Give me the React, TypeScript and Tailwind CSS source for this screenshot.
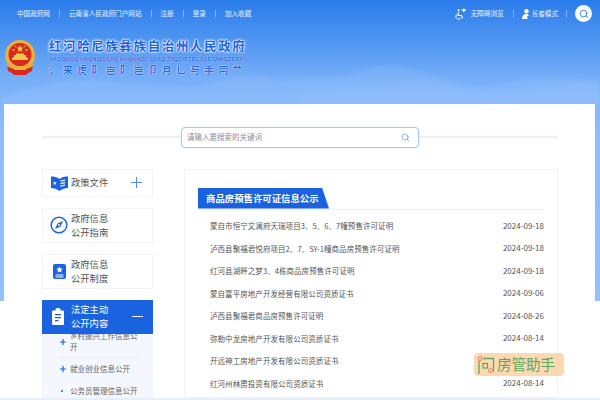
import { Search } from "lucide-react";

const rows = [
  ["蒙自市恒宁文澜府天瑞项目3、5、6、7幢预售许可证明", "2024-09-18"],
  ["泸西县聚福君悦府项目2、7、SY-1幢商品房预售许可证明", "2024-09-18"],
  ["红河县湖畔之梦3、4栋商品房预售许可证明", "2024-09-18"],
  ["蒙自富平房地产开发经营有限公司资质证书", "2024-09-06"],
  ["泸西县聚福君商品房预售许可证明", "2024-08-26"],
  ["弥勒中龙房地产开发有限公司资质证书", "2024-08-14"],
  ["开远神工房地产开发有限公司资质证书", "2024-08-14"],
  ["红河州林雳投资有限公司资质证书", "2024-08-14"],
];

function Sep() {
  return <span className="block h-[7px] w-px bg-white/40" />;
}

function Emblem() {
  return (
    <svg viewBox="0 0 34 36" className="h-[36px] w-[34px] shrink-0">
      <circle cx="16" cy="15" r="15" fill="#e9b23a" />
      <circle cx="16" cy="14.500" r="11.500" fill="#d8281f" />
      <path d="M16 5l1 2.600h2.700l-2.200 1.700.8 2.700-2.300-1.600-2.300 1.600.8-2.700-2.200-1.700H15z" fill="#f6d04d" />
      <circle cx="9.500" cy="10" r="1" fill="#f6d04d" />
      <circle cx="22.500" cy="10" r="1" fill="#f6d04d" />
      <circle cx="11.500" cy="6.500" r=".8" fill="#f6d04d" />
      <circle cx="20.500" cy="6.500" r=".8" fill="#f6d04d" />
      <path d="M8 20h16v-2l-2-1v-2h-2v-1.500h-8V15h-2v2l-2 1z" fill="#f3c648" />
      <path d="M3 24c4 3 7 2 9 4h8c2-2 5-1 9-4l-1 7c-3 1-5 3-6 4H10c-1-1-3-3-6-4z" fill="#d8281f" />
      <path d="M2 23c3 3 7 3 10 4h8c3-1 7-1 10-4l-1 3c-3 2-6 2-8 4H11c-2-2-5-2-8-4z" fill="#e9b23a" />
    </svg>
  );
}

function BookIcon() {
  return (
    <svg viewBox="0 0 17 16" className="h-[16px] w-[17px] shrink-0">
      <path d="M0 1.500c3 0 6 .5 8.500 2.500C11 2 14 1.500 17 1.500V13c-3 0-6 1-8.500 3C6 14 3 13 0 13z" fill="#1a62e0" />
      <path d="M3.800 6.200l.6 1.300 1.400.1-1.100.9.4 1.400-1.300-.8-1.200.8.300-1.400-1-.9 1.400-.1z" fill="#fff" />
      <path d="M9.500 5.500l4.500-1v1.200l-4.500 1zM9.500 8l4.500-1v1.200l-4.500 1zM9.500 10.500l4.500-1v1.200l-4.500 1z" fill="#fff" />
    </svg>
  );
}

function CompassIcon() {
  return (
    <svg viewBox="0 0 18 18" className="h-[18px] w-[18px] shrink-0">
      <circle cx="9" cy="9" r="7.800" fill="none" stroke="#1a62e0" strokeWidth="1.500" />
      <path d="M13 5l-2.500 5.500L5 13l2.500-5.500z" fill="#1a62e0" />
      <circle cx="9" cy="9" r="1" fill="#fff" />
    </svg>
  );
}

function RuleIcon() {
  return (
    <svg viewBox="0 0 13 15" className="h-[15px] w-[13px] shrink-0">
      <rect width="13" height="15" rx="2" fill="#1a62e0" />
      <path d="M6.500 2.500l1 2 2.200.3-1.600 1.500.4 2.200-2-1-2 1 .4-2.200-1.600-1.500 2.200-.3z" fill="#fff" />
      <path d="M2.500 10.500h8v1h-8zM2.500 12.500h8v1h-8z" fill="#fff" />
    </svg>
  );
}

function ClipboardIcon() {
  return (
    <svg viewBox="0 0 12 17" className="h-[17px] w-[12px] shrink-0">
      <path d="M1 2.500h2.500V1.500A1.500 1.500 0 0 1 5 0h2a1.500 1.500 0 0 1 1.500 1.500v1H11a1 1 0 0 1 1 1V16a1 1 0 0 1-1 1H1a1 1 0 0 1-1-1V3.500a1 1 0 0 1 1-1z" fill="#fff" />
      <path d="M3 6h6v1.300H3zM3 9h6v1.300H3zM3 12h3.500v1.300H3z" fill="#1a62e0" />
    </svg>
  );
}

function WheelchairIcon() {
  return (
    <svg viewBox="0 0 13 13" className="h-[12px] w-[12px]">
      <circle cx="4" cy="2.500" r="1.200" fill="#fff" />
      <path d="M3.500 4.500v3.700h3.500l1.500 3" fill="none" stroke="#fff" strokeWidth="1.200" />
      <path d="M2.600 6.500a3 3 0 1 0 4 4" fill="none" stroke="#fff" strokeWidth="1" />
      <path d="M7 2a3.500 3.500 0 0 1 5 0l-2.500 2.500z" fill="#fff" />
    </svg>
  );
}

function PersonIcon() {
  return (
    <svg viewBox="0 0 8 10" className="h-[10px] w-[8px]">
      <circle cx="4.500" cy="2.200" r="2.200" fill="#fff" />
      <path d="M0 10c0-3 1.500-5 4-5 1.500 0 2.500.7 3 1.500L4.500 8 6 10z" fill="#fff" />
    </svg>
  );
}

function SmallPlus() {
  return (
    <svg viewBox="0 0 6 6" className="h-[6px] w-[6px]">
      <path d="M0 3h6M3 0v6" stroke="#1a62e0" strokeWidth="1.200" />
    </svg>
  );
}

function Card({ icon, lines, right }: { icon: React.ReactNode; lines: string[]; right?: React.ReactNode }) {
  return (
    <div className={`flex items-center border border-[#f1f3f6] bg-white pl-[7px] pr-[10px] ${lines.length > 1 ? "h-[35px]" : "h-[28px]"}`}>
      <div className="flex w-[21px] shrink-0 justify-center pr-[3px]">{icon}</div>
      <div className="flex-1 pt-[1px] text-[9.300px] leading-[13.500px] text-[#555]">
        {lines.map((l) => (
          <div key={l}>{l}</div>
        ))}
      </div>
      {right}
    </div>
  );
}

export default function App() {
  return (
    <div
      className="relative flex h-[400px] w-[600px] flex-col overflow-hidden bg-white bg-[linear-gradient(180deg,#2a7ceb_0px,#4f95f1_40px,#78aff9_80px,#8dbdfd_130px,#93c1ff_301px)] bg-[length:100%_301px] bg-no-repeat font-['Noto_Sans_CJK_SC','Noto_Sans',sans-serif]"
    >
      <svg viewBox="0 0 600 50" className="absolute left-0 top-[55px] h-[50px] w-[600px] blur-[2px]">
        <path d="M0 42C40 30 70 20 110 26c30 5 50 2 80 6 40-8 60-20 90-6 30-8 50-2 70-6 20-8 40-14 60-6 30 6 50 20 80 16 40-6 70-14 110 0v20H0z" fill="#fff" opacity=".07" />
        <path d="M300 40c40-10 70-6 100-10 30-2 60 2 90 8 40-4 70-6 110-14v26H300z" fill="#fff" opacity=".05" />
      </svg>

      <div className="relative flex h-[27px] shrink-0 items-center pl-[17px] pr-[8px] text-[6.600px] text-white/90">
        <div className="flex items-center gap-[9px]">
          <span>中国政府网</span>
          <Sep />
          <span>云南省人民政府门户网站</span>
          <Sep />
          <span>注册</span>
          <Sep />
          <span>登录</span>
          <Sep />
          <span>加入收藏</span>
        </div>
        <div className="ml-auto flex items-center">
          <WheelchairIcon />
          <span className="ml-[4px]">无障碍浏览</span>
          <span className="ml-[9px] mr-[8px]"><Sep /></span>
          <PersonIcon />
          <span className="ml-[2px]">长者模式</span>
          <span className="ml-[8px] mr-[8px]"><Sep /></span>
          <div className="flex h-[17px] w-[17px] items-center justify-center rounded-full bg-white">
            <Search size={10} strokeWidth={2} className="text-[#2a6fc9]" />
          </div>
        </div>
      </div>

      <div className="relative flex h-[76.500px] shrink-0 items-start pl-[4px] pt-[12px]">
        <div className="pt-[1px]">
          <Emblem />
        </div>
        <div className="ml-[11px] w-[200px]">
          <div className="whitespace-nowrap text-[12.500px] font-bold leading-[14px] tracking-[1.600px] text-[#1a5fe0] [text-shadow:0_0_1px_#fff,0_0_1px_#fff,0_0_2px_#fff,0_0_3px_#fff]">
            红河哈尼族彝族自治州人民政府
          </div>
          <div className="mt-[3px] whitespace-nowrap font-['Liberation_Sans',sans-serif] text-[5.400px] font-bold leading-[7px] tracking-[.13px] text-[#1a5fe0] [text-shadow:0_0_1px_#fff]">
            HAOQHOQ HAQNIQSSAQ HAQHHOL SSAQ ZIIQZIIFZEL SSEIQMIQZEIFFU
          </div>
          <div className="mt-[1px] whitespace-nowrap text-[10px] font-bold leading-[11px] tracking-[4.100px] text-[#2a66e0] [text-shadow:0_0_1px_#fff,0_0_1px_#fff]">
            氵来虎阝岂阝岂卩月乚与手冃艹
          </div>
        </div>
      </div>

      <div className="mx-[4px] mr-[5px] flex min-h-0 flex-1 flex-col bg-white px-[38px] pr-[37px] pt-[23px]">
        <div className="flex shrink-0 items-center">
          <div className="h-[2px] flex-1 bg-[#eaf1fd]" />
          <div className="flex h-[21px] w-[238px] items-center justify-between rounded-[4px] border border-[#a9c9f8] bg-white pl-[5px] pr-[8px] shadow-[0_0_3px_#dbe8fb]">
            <span className="text-[7.500px] text-[#8d8d8d]">请输入要搜索的关键词</span>
            <Search size={9} strokeWidth={2} className="text-[#5a9bf0]" />
          </div>
          <div className="h-[2px] flex-1 bg-[#eaf1fd]" />
        </div>

        <div className="mt-[21px] flex min-h-0 flex-1 gap-[31px]">
          <div className="flex w-[111px] shrink-0 flex-col gap-[11px]">
            <Card icon={<BookIcon />} lines={["政策文件"]} right={<span className="text-[#4f8bec]"><svg viewBox="0 0 11 11" className="h-[11px] w-[11px]"><path d="M0 5.500h11M5.500 0v11" stroke="currentColor" strokeWidth="1" /></svg></span>} />
            <Card icon={<CompassIcon />} lines={["政府信息", "公开指南"]} />
            <Card icon={<RuleIcon />} lines={["政府信息", "公开制度"]} />
            <div className="flex min-h-0 flex-1 flex-col overflow-hidden bg-[#f4f7fd]">
              <div className="relative z-10 flex h-[34px] shrink-0 items-center bg-[#1a62e0] pl-[10px] pr-[10px] text-white">
                <ClipboardIcon />
                <div className="ml-[7px] flex-1 text-[9.300px] leading-[13.500px]">
                  <div>法定主动</div>
                  <div>公开内容</div>
                </div>
                <div className="h-px w-[11px] bg-white" />
              </div>
              <div className="-mt-[4px] pl-[17px] pr-[13px] text-[7.500px] text-[#666]">
                <div className="relative border-b border-[#edf0f6] pb-[5px] pl-[11px] leading-[11px]">
                  <span className="absolute left-[1px] top-[9px] flex"><SmallPlus /></span>
                  乡村振兴工作信息公开
                </div>
                <div className="relative flex h-[22px] items-center pl-[11px]">
                  <span className="absolute left-[1px] flex"><SmallPlus /></span>
                  就业创业信息公开
                </div>
                <div className="relative flex h-[22px] items-center whitespace-nowrap pl-[11px]">
                  <span className="absolute left-[2px] h-[2px] w-[2px] rounded-full bg-[#1a62e0]" />
                  公务员管理信息公开
                </div>
              </div>
            </div>
          </div>

          <div className="min-w-0 flex-1 border border-[#f1f3f6] bg-white px-[13px] pt-[18px]">
            <div className="border-b border-[#eef1f6]">
              <div className="flex h-[21px] w-[131px] items-center bg-[#1a62e0] pl-[8px] text-[9.400px] font-bold text-white [clip-path:polygon(0_0,124px_0,100%_100%,0_100%)]">
                商品房预售许可证信息公示
              </div>
            </div>
            <div className="mt-[5px]">
              {rows.map(([title, date]) => (
                <div key={title} className="flex h-[22.500px] items-center justify-between pl-[12px] text-[7.500px] tracking-[.06px] text-[#555]">
                  <span>{title}</span>
                  <span className="text-[8px] tracking-normal">{date}</span>
                </div>
              ))}
            </div>
          </div>
        </div>
      </div>

      <div className="h-[2px] shrink-0 bg-[#e6eef9]" />

      <div className="absolute left-[474px] top-[353px] flex h-[23px] w-[90px] items-center rounded-[4px] bg-[#fdcf9f]/80 pl-[3px] text-[14.500px] leading-none text-[#5ba95f]">
        <svg viewBox="0 0 18 18" className="mr-[2px] h-[18px] w-[18px] shrink-0">
          <path d="M2 5v13M6 2.500h10.500v13" fill="none" stroke="#5ba95f" strokeWidth="1.300" />
          <rect x="6" y="7.500" width="4.500" height="4.500" fill="none" stroke="#5ba95f" strokeWidth="1.200" />
          <circle cx="3" cy="2.500" r="2" fill="#fdcf9f" stroke="#f0825a" strokeWidth="1" />
          <circle cx="13.500" cy="14.500" r="2" fill="#fdcf9f" stroke="#f0825a" strokeWidth="1" />
        </svg>
        房管助手
      </div>
    </div>
  );
}
